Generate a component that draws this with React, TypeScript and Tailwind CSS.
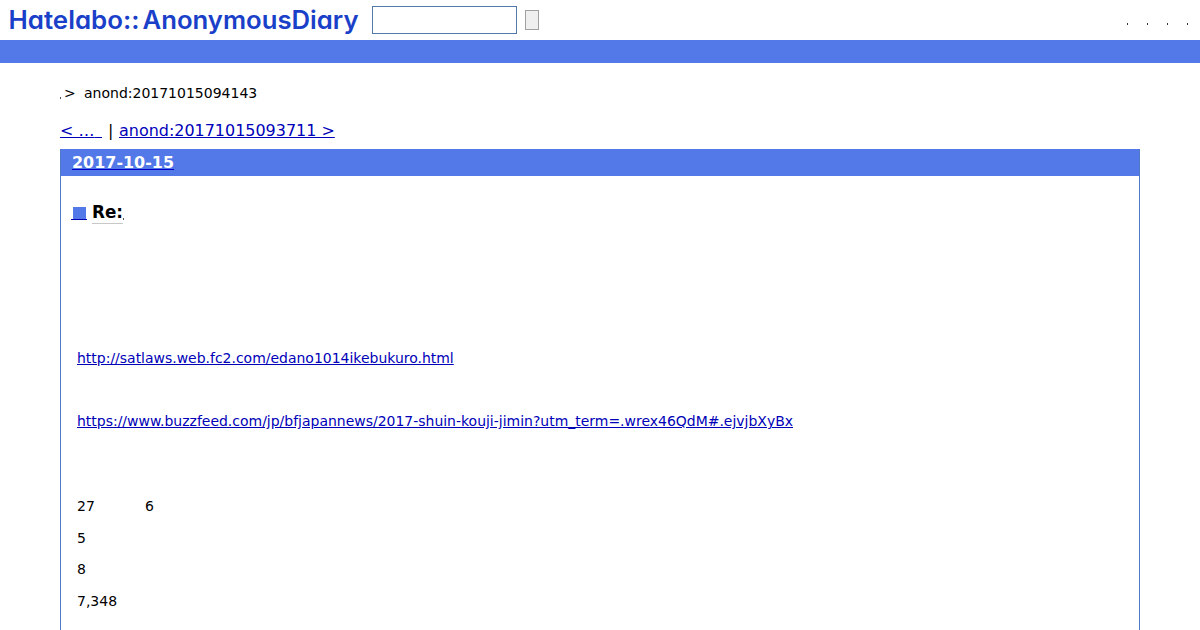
import React from "react";

const rows = ["5", "8", "7,348"];

function Logo() {
  return (
    <svg width="372" height="40" className="block shrink-0" role="img">
      <g
        className="fill-[#1a3fc8] font-[Inter,sans-serif] font-semibold [font-feature-settings:'cv11']"
        fontSize="25"
      >
        <text x="8.5" y="28.5" textLength="131" lengthAdjust="spacingAndGlyphs">
          Hatelabo::
        </text>
        <text x="142.5" y="28.5" textLength="216" lengthAdjust="spacingAndGlyphs">
          AnonymousDiary
        </text>
      </g>
    </svg>
  );
}

function Header() {
  return (
    <header>
      <div className="flex h-10 items-center">
        <Logo />
        <input className="h-7 w-[145px] border border-[#5279a8] bg-white px-1 outline-none" />
        <button className="ml-2 h-5 w-3.5 border border-[#a0a0a0] bg-[#efefef]" />
        <ul className="mr-3 ml-auto flex gap-[19px] pt-2">
          {[0, 1, 2, 3].map((i) => (
            <li key={i} className="h-[2px] w-px bg-[#333333]" />
          ))}
        </ul>
      </div>
      <div className="h-[23px] bg-[#5279e7]" />
    </header>
  );
}

export default function App() {
  return (
    <div className="flex h-[630px] flex-col overflow-hidden bg-white font-['DejaVu_Sans',sans-serif] text-black">
      <Header />
      <main className="mx-[60px] flex grow flex-col">
        <div className="mt-5 flex h-5 items-center text-sm leading-5">
          <span className="mt-2.5 h-[2px] w-px bg-[#555555]" />
          <span className="ml-[3px] w-5">&gt;</span>
          <span>anond:20171015094143</span>
        </div>
        <nav className="mt-[17px] flex h-[22px] text-[15.96px] leading-[22px] whitespace-pre">
          <a className="w-[42px] text-[#0000b8] underline">
            {"< …"}
            <span className="text-[12px]">{"  "}</span>
          </a>
          <span className="w-[17px] pl-1.5">|</span>
          <a className="text-[#0000b8] underline">anond:20171015093711 &gt;</a>
        </nav>
        <section className="mt-[7px] grow border-x border-[#5279c7]">
          <h2 className="h-[27px] bg-[#5279e7] pl-[11px] text-[15.96px] leading-[27px] font-bold text-white">
            <a className="underline decoration-[#0000c8]">2017-10-15</a>
          </h2>
          <h3 className="mt-6 flex h-6 pl-2.5 text-[16.8px] leading-6 font-bold">
            <span className="mt-[7px] mr-[5px] flex h-[13px] w-4 border-b border-[#0000b0] pl-0.5">
              <span className="h-3 w-[13px] bg-[#5279e7]" />
            </span>
            <span className="h-6 border-b border-[#c8c8c8]">Re:</span>
            <span className="mt-[18px] h-[2px] w-px bg-[#555555]" />
          </h3>
          <div className="pl-4 text-sm leading-5">
            <p className="mt-[124px] text-[13.98px]">
              <a className="text-[#0000b8] underline">http://satlaws.web.fc2.com/edano1014ikebukuro.html</a>
            </p>
            <p className="mt-[43px] text-[13.98px]">
              <a className="text-[#0000b8] underline">
                https://www.buzzfeed.com/jp/bfjapannews/2017-shuin-kouji-jimin?utm_term=.wrex46QdM#.ejvjbXyBx
              </a>
            </p>
            <p className="mt-[65px] flex">
              <span className="w-[68px]">27</span>
              <span>6</span>
            </p>
            <div className="mt-[11.75px] flex flex-col gap-[11.6px]">
              {rows.map((row) => (
                <p key={row}>{row}</p>
              ))}
            </div>
          </div>
        </section>
      </main>
    </div>
  );
}
